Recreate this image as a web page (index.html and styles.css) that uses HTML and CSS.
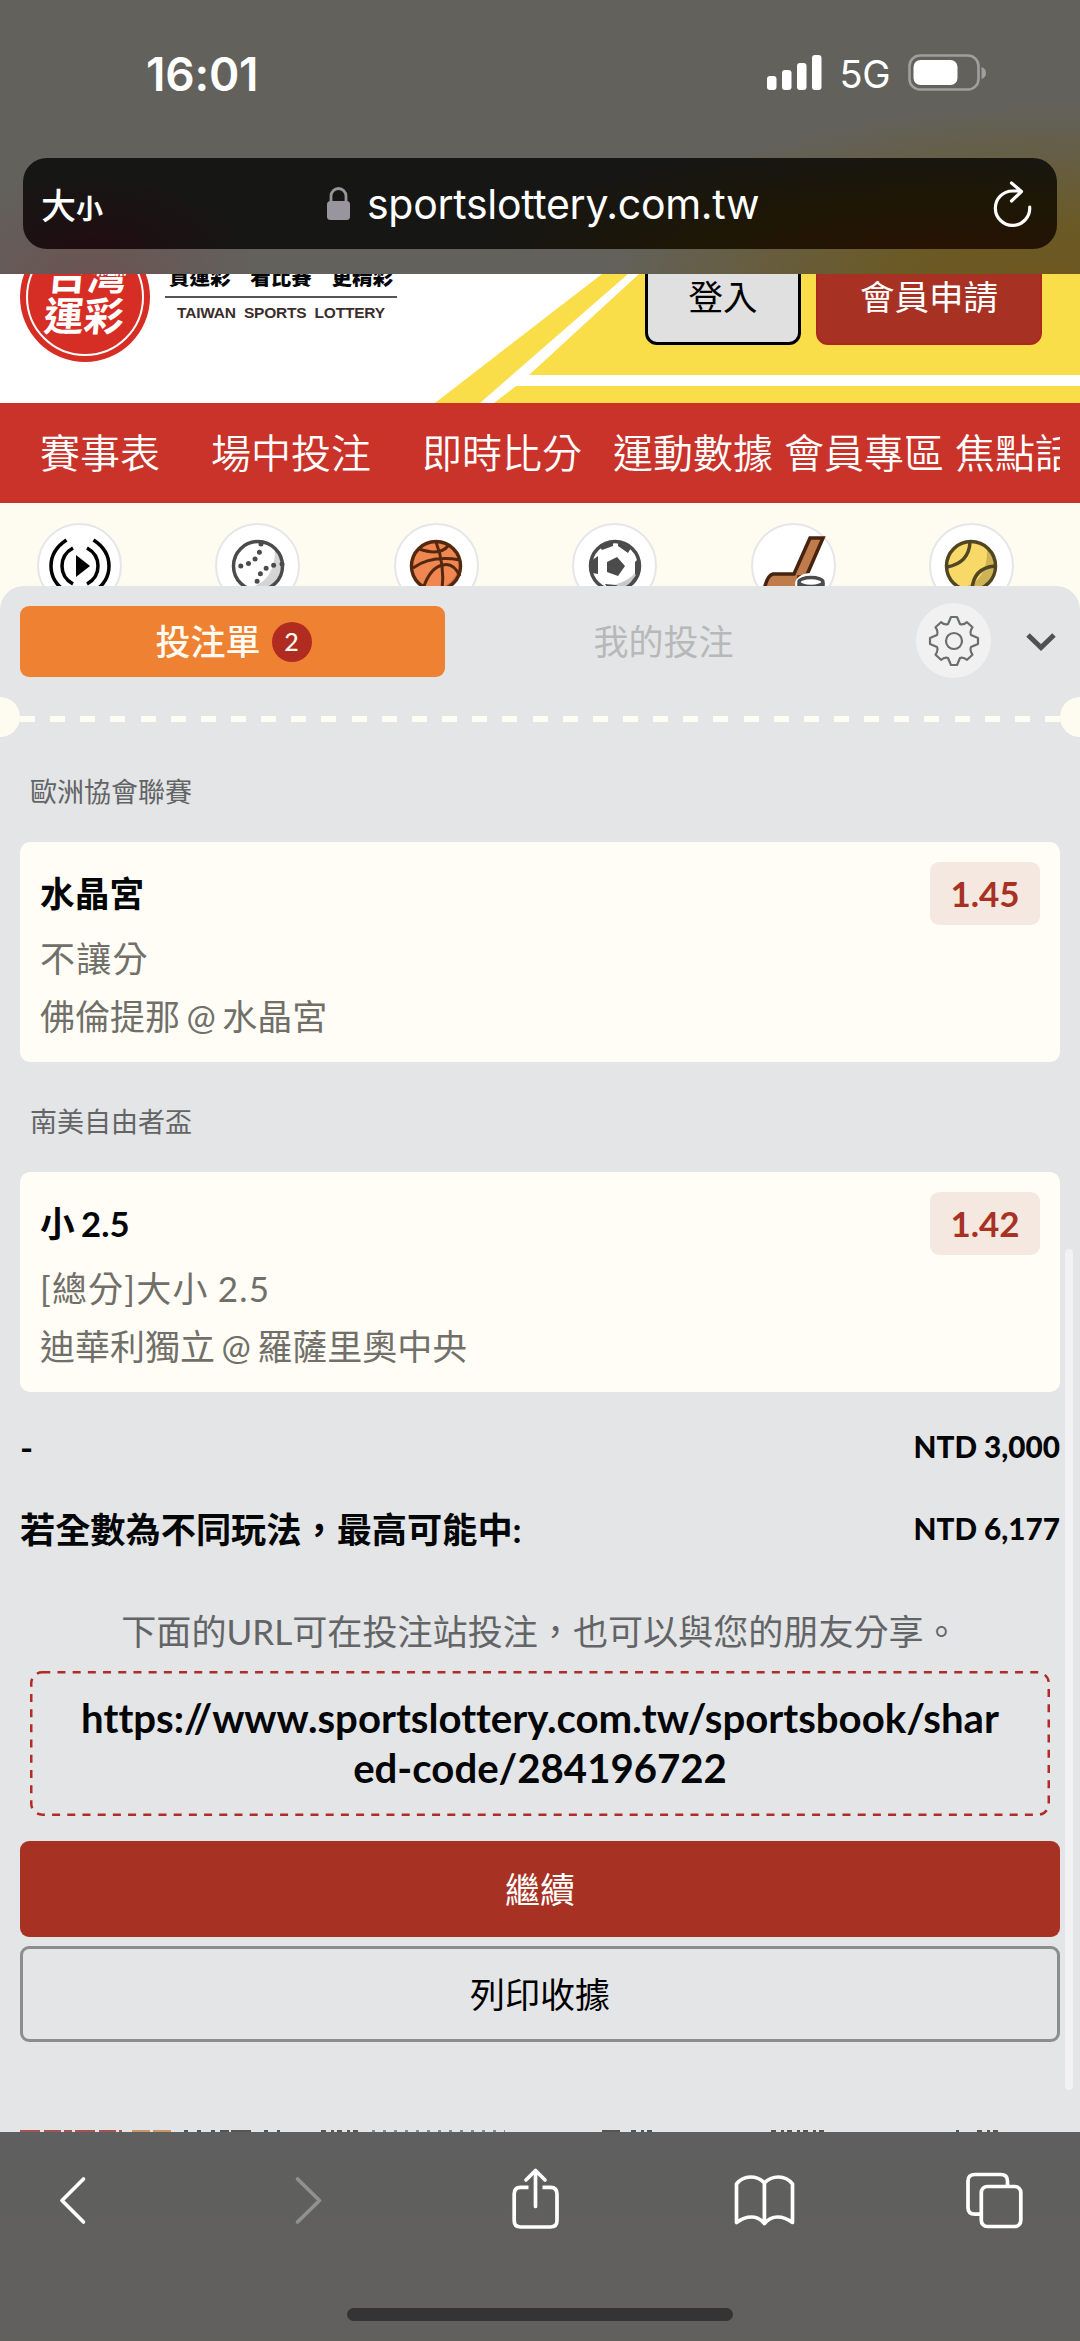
FILE: index.html
```html
<!DOCTYPE html>
<html lang="zh-Hant">
<head>
<meta charset="utf-8">
<title>台灣運彩</title>
<link rel="stylesheet" href="styles.css">
</head>
<body>
<div class="phone">
  <header class="browser-top">
    <div class="status">
      <span class="time">16:01</span>
      <div class="status-right">
        <svg class="signal" width="56" height="36" viewBox="0 0 56 36" fill="#fff"><rect x="0" y="21" width="9.5" height="14" rx="3"/><rect x="15" y="15" width="9.5" height="20" rx="3"/><rect x="30" y="8" width="9.5" height="27" rx="3"/><rect x="45" y="0" width="9.5" height="35" rx="3"/></svg>
        <span class="network">5G</span>
        <svg class="battery" width="79" height="38" viewBox="0 0 79 38"><rect x="1.5" y="1.5" width="69" height="34" rx="10.5" fill="none" stroke="#a09f9b" stroke-width="2.6"/><rect x="5.5" y="6" width="44" height="25" rx="7" fill="#fff"/><path d="M73.500 13q4.500 1.500 4.500 6t-4.500 6z" fill="#a09f9b"/></svg>
      </div>
    </div>
    <div class="address">
      <span class="text-size">大<small>小</small></span>
      <span class="host"><svg width="23" height="34" viewBox="0 0 23 34"><path d="M4 16V9a7.500 7.500 0 0 1 15 0V16" fill="none" stroke="#98969c" stroke-width="2.800"/><rect x="0" y="14" width="23" height="19" rx="3.500" fill="#98969c"/></svg>sportslottery.com.tw</span>
      <svg class="reload" width="40" height="46" viewBox="0 0 40 46" fill="none" stroke="#fff" stroke-width="3.200" stroke-linecap="round" stroke-linejoin="round"><path d="M36.700 26A17.200 17.200 0 1 1 19.500 10H28M18.500 2L28.500 10.500L18.500 20"/></svg>
    </div>
  </header>

  <section class="site-header">
    <svg class="stripes" width="1080" height="129" viewBox="0 0 1080 129"><rect width="1080" height="129" fill="#fff"/><path d="M602 0H1080V129H435z" fill="#f9de49"/><path d="M628 0H639L529 101H1080V112H516L494 129H480z" fill="#fff"/></svg>
    <div class="logo"><span class="ring"></span><span class="logo-text">台灣<br>運彩</span></div>
    <div class="slogan"><b><i>買運彩</i><i>看比賽</i><i>更精彩</i></b><span>TAIWAN SPORTS LOTTERY</span></div>
    <div class="account"><button class="login">登入</button><button class="join">會員申請</button></div>
  </section>

  <nav class="nav"><div class="nav-items"><span class="wide">賽事表</span><span class="wide">場中投注</span><span class="medium">即時比分</span><span>運動數據</span><span>會員專區</span><span>焦點話題</span></div></nav>

  <div class="sports">
    <span class="sport"><svg viewBox="0 0 60 60" fill="none" stroke="#000" stroke-width="3.500"><path d="M16.500 4Q1 14 1 30T16.500 56M43.500 4Q59 14 59 30T43.500 56M23 12Q12 18 12 30T23 48M37 12Q48 18 48 30T37 48"/><path d="M26 19V41L40 30z" fill="#000" stroke="none"/></svg></span>
    <span class="sport"><svg viewBox="0 0 60 60"><circle cx="30" cy="30" r="24.500" fill="#fff"/><path d="M47 14A24 24 0 0 1 20 52Q47 46 47 14" fill="#d5d5d5"/><path d="M33 8Q32 29 6 31M54 28Q29 29 28 53" fill="none" stroke="#4b4b4b" stroke-width="5" stroke-linecap="round" stroke-dasharray="0 8.200"/><circle cx="30" cy="30" r="24.500" fill="none" stroke="#4b4b4b" stroke-width="3.500"/></svg></span>
    <span class="sport"><svg viewBox="0 0 60 60" fill="none" stroke="#54280f" stroke-width="3"><circle cx="30" cy="30" r="24.500" fill="#f18750" stroke="none"/><path d="M53 31A24 24 0 0 1 27 54Q48 50 53 31" fill="#cf7342" stroke="none"/><circle cx="30" cy="30" r="24.500" stroke-width="3.500"/><path d="M30 6Q39 29 36 54M13 13Q34 20 42 10M7 32Q25 19 54 24M18 50Q25 31 37 29Q47 26 54 40"/></svg></span>
    <span class="sport"><svg viewBox="0 0 60 60"><circle cx="30" cy="30" r="24.500" fill="#fff"/><path d="M54 30A24 24 0 0 1 20 54L32 48Q50 42 54 30" fill="#c9c9c9"/><path d="M15 11L28 5V10L17 14zM33 6L46 12L43 17L33 10zM6 25L13 20V38L7 37zM55 35L48 43L41 54zM20 48L31 49L38 54L25 56zM54 22L50 26V39L54 36zM22 26L32 21L40 30L33 40L22 36z" fill="#4b4b4b"/><circle cx="30" cy="30" r="24.500" fill="none" stroke="#4b4b4b" stroke-width="3.500"/></svg></span>
    <span class="sport"><svg viewBox="0 0 60 60"><path d="M47 2H60L43 41H36V55H2V50Q5 39 10 38H31z" fill="#bf7b49" stroke="#452310" stroke-width="3.500"/><ellipse cx="48" cy="48" rx="16" ry="11" fill="#fff"/><path d="M36 47V58H60V47" fill="#fff" stroke="#4b4b4b" stroke-width="3.500"/><ellipse cx="48" cy="46" rx="12" ry="4.500" fill="#fff" stroke="#4b4b4b" stroke-width="3.500"/></svg></span>
    <span class="sport"><svg viewBox="0 0 60 60" fill="none" stroke="#514622" stroke-width="3.500"><circle cx="30" cy="30" r="24.500" fill="#f8d968" stroke="none"/><path d="M46 13A24 24 0 0 1 20 52Q47 46 46 13" fill="#ceb356" stroke="none"/><circle cx="30" cy="30" r="24.500"/><path d="M29 6Q28 27 6 31M54 30Q32 32 31 54"/></svg></span>
  </div>

  <main class="slip">
    <div class="tabs">
      <div class="tab active"><span>投注單</span><em>2</em></div>
      <div class="tab"><span>我的投注</span></div>
      <span class="gear"><svg width="52" height="52" viewBox="-26 -26 52 52" fill="none" stroke="#6c6d6e" stroke-width="2.200" stroke-linejoin="round"><path d="M-3-24H3L6-17Q9-15.500 13-18.800L18.500-13.800Q15.500-9 17-6L24-3V3L17 6Q15.500 9 18.500 13.800L13 18.800Q9 15.500 6 17L3 24H-3L-6 17Q-9 15.500-13 18.800L-18.500 13.800Q-15.500 9-17 6L-24 3V-3L-17-6Q-15.500-9-18.500-13.800L-13-18.800Q-9-15.500-6-17z"/><circle r="8"/></svg></span>
      <svg class="chevron" width="30" height="20" viewBox="0 0 30 20" fill="none" stroke="#4f5152" stroke-width="5"><path d="M2 3L15 15.500L28 3"/></svg>
    </div>
    <div class="perforation"><span></span></div>

    <h3 class="league">歐洲協會聯賽</h3>
    <article class="bet">
      <div><h4>水晶宮</h4><p class="market">不讓分</p><p>佛倫提那 @ 水晶宮</p></div>
      <strong>1.45</strong>
    </article>
    <h3 class="league">南美自由者盃</h3>
    <article class="bet">
      <div><h4>小 2.5</h4><p class="market">[總分]大小 2.5</p><p>迪華利獨立 @ 羅薩里奧中央</p></div>
      <strong>1.42</strong>
    </article>

    <div class="total first"><span>-</span><b>NTD 3,000</b></div>
    <div class="total"><span>若全數為不同玩法，最高可能中:</span><b>NTD 6,177</b></div>
    <p class="hint">下面的URL可在投注站投注，也可以與您的朋友分享。</p>
    <div class="share-url"><svg width="1020" height="145" viewBox="0 0 1020 145"><rect x="1.250" y="1.250" width="1017.500" height="142.500" rx="11" fill="none" stroke="#b02c27" stroke-width="2.500" stroke-dasharray="8 7.200"/></svg>https://www.sportslottery.com.tw/sportsbook/shar<br>ed-code/284196722</div>
    <button class="primary">繼續</button>
    <button class="secondary">列印收據</button>
    <i class="scrollbar"></i>
    <svg class="page-edge" width="1080" height="3" viewBox="0 0 1080 3" fill="none" stroke-width="2"><path d="M20 2H122" stroke="#a35351" stroke-dasharray="20 4 17 3 8 3"/><path d="M132 2H172" stroke="#c89768" stroke-dasharray="18 3"/><path d="M184 2H280" stroke="#555" stroke-dasharray="4 9 4 10 4 5 9 2 20 13 4 9"/><path d="M602 2H620" stroke="#555"/><path d="M321 2H362M631 2H654M771 2H828M956 2H959M977 2H1001" stroke="#555" stroke-dasharray="5 5 3 3"/><path d="M372 2H505" stroke="#888" stroke-dasharray="3 8"/></svg>
  </main>

  <footer class="browser-bottom">
    <div class="toolbar">
      <svg width="108" height="70" viewBox="0 0 108 70"><path d="M83.500 13L62 34.500L83.500 56"/></svg>
      <svg class="dim" width="108" height="70" viewBox="0 0 108 70"><path d="M62.500 13L84.500 34.500L62.500 56"/></svg>
      <svg width="108" height="70" viewBox="0 0 108 70"><path class="butt" d="M58.500 21.300H50.500Q44.200 21.300 44.200 28V54.500Q44.200 61 50.500 61H80.500Q87 61 87 54.500V28Q87 21.300 80.500 21.300H72.500"/><path d="M65.500 40.500V4.500M56 14L65.500 4.500L75 14"/></svg>
      <svg width="108" height="70" viewBox="0 0 108 70"><path d="M60.400 17V57.500Q55 51 47.500 51T32.500 56.500V18Q38 11 46.500 11T60.400 17Q66 11 74.500 11T88.500 18V56.500Q81 51 73.500 51T60.400 57.500"/></svg>
      <svg width="108" height="70" viewBox="0 0 108 70"><path class="butt" d="M42 48.200H36Q29 48.200 29 41.500V15Q29 8.500 36 8.500H61.500Q68.500 8.500 68.500 15V20"/><rect x="42.300" y="20.500" width="39.500" height="40" rx="6"/></svg>
    </div>
    <div class="home"></div>
  </footer>
</div>
</body>
</html>
```
FILE: styles.css
```css
* { box-sizing: border-box; }
body, h3, h4, p { margin: 0; }
body { font-family: Lato, "Noto Sans CJK TC", sans-serif; color: #050607; }
button { font: inherit; padding: 0; }
.phone { width: 1080px; height: 2341px; overflow: hidden; display: flex; flex-direction: column; background: #fefbf0; }

.browser-top { height: 274px; flex: none; padding: 0 23px; color: #fff; font-family: Inter, "Noto Sans CJK TC", sans-serif;
  background: radial-gradient(ellipse 440px 185px at 1040px 290px, #6d561f 0%, #6b5a26 35%, rgba(98,97,92,0) 100%), radial-gradient(ellipse 170px 120px at 90px 290px, #6b5252, rgba(98,97,92,0)), #62615c; }
.status { height: 158px; display: flex; justify-content: space-between; padding: 51px 70px 0 123px; }
.time { font-size: 46px; font-weight: 600; line-height: 46px; letter-spacing: -0.200px; }
.status-right { display: flex; align-items: flex-start; padding-top: 3px; }
.signal { margin-top: 1px; }
.network { font-size: 38px; line-height: 40px; margin: 0 18px 0 17px; letter-spacing: -.5px; }
.address { height: 91px; border-radius: 24px; display: flex; align-items: center; padding: 0 24px 0 18px;
  background: radial-gradient(ellipse 480px 130px at 920px 110px, #2b1003, rgba(31,23,3,.9) 50%, rgba(22,22,20,0)), radial-gradient(ellipse 150px 80px at 70px 100px, #220c10, rgba(22,22,20,0)), #161614; }
.text-size { width: 286px; flex: none; font-size: 35px; font-weight: 500; white-space: nowrap; }
.text-size small { font-size: 27px; font-weight: 700; }
.host { display: flex; align-items: center; gap: 17px; font-size: 41px; letter-spacing: -.3px; }
.reload { margin-left: auto; }

.site-header { height: 129px; flex: none; position: relative; overflow: hidden; }
.stripes { position: absolute; left: 0; top: 0; }
.logo { position: absolute; left: 20px; top: -42px; width: 130px; height: 130px; border-radius: 50%; background: #d62d25; color: #fff; display: flex; align-items: center; justify-content: center; }
.ring { position: absolute; inset: 6px; border: 2px solid #fff; border-radius: 50%; }
.logo-text { font-size: 40px; line-height: 41px; margin: -6px 0 0 2px; font-weight: 700; transform: skewX(-5deg); font-family: "Noto Sans CJK TC", sans-serif; }
.slogan { position: absolute; left: 165px; top: -15px; width: 232px; font-family: "Liberation Sans", "Noto Sans CJK TC", sans-serif; }
.slogan b { display: flex; justify-content: space-between; padding: 0 4px; height: 39px; line-height: 38px; font-size: 20.500px; font-weight: 900; border-bottom: 2px solid #555; }
.slogan i { font-style: normal; }
.slogan span { display: block; text-align: center; font-size: 15.500px; line-height: 29px; font-weight: 700; color: #3b2d2c; white-space: nowrap; word-spacing: 4px; letter-spacing: -.2px; }
.account { position: relative; display: flex; justify-content: flex-end; gap: 15px; padding-right: 38px; margin-top: -22px; }
.account button { height: 93px; border-radius: 12px; font-size: 34.500px; line-height: 82px; padding-bottom: 3px; }
.login { width: 156px; background: #e0e0e0; border: 3px solid #000; color: #000; }
.join { width: 226px; background: #a73224; border: 2px solid #ac281e; color: #fff; }

.nav { height: 100px; flex: none; background: #c9332a; padding: 0 20px; color: #fff; }
.nav-items { height: 100px; overflow: hidden; display: flex; white-space: nowrap; font-size: 40px; line-height: 100px; padding-left: 20px; font-weight: 350; }
.nav-items span { flex: none; margin-right: 11px; }
.nav-items .wide { margin-right: 51px; }
.nav-items .medium { margin-right: 31px; }
.sports { height: 83px; flex: none; display: flex; justify-content: space-between; padding: 20px 66px 0 37px; }
.sport { width: 85px; height: 85px; flex: none; border: 2px solid #e5e6e8; border-radius: 50%; background: #fff; display: flex; align-items: center; justify-content: center; }
.sport svg { width: 60px; height: 60px; overflow: visible; }

.slip { position: relative; height: 1546px; flex: none; display: flex; flex-direction: column; padding: 17px 20px 0; background: #e4e5e7; border-radius: 24px 24px 0 0; }
.tabs { height: 77px; display: flex; align-items: center; }
.tab { width: 425px; height: 71px; flex: none; display: flex; align-items: center; justify-content: center; font-size: 35px; color: #b7b8b9; border-radius: 9px; }
.tab span { padding-bottom: 4px; }
.tab.active { background: #ef8133; color: #fffbf0; font-weight: 500; padding-left: 2px; }
.tab em { width: 40px; height: 40px; margin-left: 11px; border-radius: 50%; background: #b02c21; font-size: 25px; line-height: 39px; text-align: center; font-style: normal; }
.tab:nth-child(2) { width: 437px; }
.gear { width: 75px; height: 75px; margin: -2px 0 0 34px; border-radius: 50%; background: #f1f1f1; display: flex; align-items: center; justify-content: center; flex: none; }
.chevron { margin-left: 35px; flex: none; }
.perforation { height: 40px; margin: 17px -20px 0; display: flex; align-items: center; justify-content: space-between; }
.perforation::before, .perforation::after { content: ""; width: 20px; height: 40px; background: #fefbf0; border-radius: 0 20px 20px 0; }
.perforation::after { border-radius: 20px 0 0 20px; }
.perforation span { flex: 1; height: 6px; margin-top: 3px; background: repeating-linear-gradient(90deg, #fffdf3 0 15px, transparent 15px 30.150px); }
.league { height: 40px; margin: 35px 10px 0; font-size: 27px; line-height: 40px; font-weight: 400; color: #626466; }
.bet { height: 220px; margin-top: 30px; padding: 20px; background: #fffdf5; border-radius: 10px; display: flex; justify-content: space-between; }
.bet + .league { margin-top: 40px; }
.bet h4 { font-size: 34.700px; line-height: 64px; font-weight: 700; word-spacing: -2px; }
.bet p { font-size: 35px; line-height: 60px; color: #706f69; word-spacing: -2.500px; }
.bet p.market { height: 60px; line-height: 64px; letter-spacing: 1.200px; word-spacing: -1px; }
.bet strong { width: 110px; height: 63px; border-radius: 9px; background: #f5e8e0; color: #a73224; font-size: 35px; line-height: 63px; text-align: center; }
.total { height: 82px; display: flex; align-items: center; justify-content: space-between; font-size: 35.200px; font-weight: 700; }
.total b { font-size: 29.700px; }
.total span { padding-bottom: 2px; }
.total.first { margin-top: 13px; }
.total.first span { padding: 2px 0 0; }
.hint { margin-top: 32px; height: 60px; line-height: 60px; font-size: 35.100px; text-align: center; color: #626466; white-space: nowrap; }
.share-url { position: relative; height: 145px; margin: 10px 10px 0; padding-top: 22px; font-size: 40.150px; line-height: 50px; font-weight: 700; text-align: center; white-space: nowrap; font-variant-ligatures: none; }
.share-url svg { position: absolute; left: 0; top: 0; }
.primary, .secondary { height: 96px; border-radius: 9px; font-size: 35px; flex: none; padding-bottom: 4px; }
.primary { margin-top: 25px; border: 0; background: #a73224; color: #fff; }
.secondary { margin-top: 9px; border: 3px solid #8b8d8e; background: transparent; color: #000; }
.scrollbar { position: absolute; left: 1065px; top: 663px; width: 8px; height: 841px; border-radius: 4px; background: #f2f2f4; }
.page-edge { position: absolute; left: 0; bottom: 0; }

.browser-bottom { height: 209px; flex: none; background: linear-gradient(#5f5f5f, #61605d); }
.toolbar { height: 176px; padding: 34px 33px 0 0; display: flex; justify-content: space-between; }
.toolbar svg { flex: none; fill: none; stroke: #fff; stroke-width: 3.700; stroke-linecap: round; stroke-linejoin: round; }
.toolbar .butt { stroke-linecap: butt; }
.toolbar .dim { stroke: #919191; }
.home { width: 386px; height: 13px; margin: 0 auto; border-radius: 7px; background: #343434; }
```
